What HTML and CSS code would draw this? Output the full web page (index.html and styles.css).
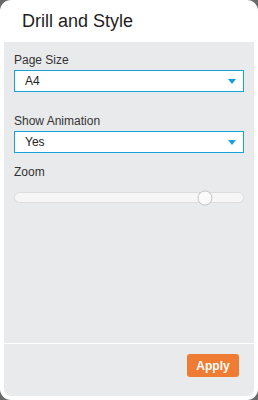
FILE: index.html
```html
<!DOCTYPE html>
<html lang="en">
<head>
    <meta charset="UTF-8">
    <meta name="viewport" content="width=device-width, initial-scale=1.0">
    <title>Drill and Style</title>
    <link rel="stylesheet" href="styles.css">
</head>
<body>
    <div class="dialog">
        <div class="dialog-title">Drill and Style</div>
        <div class="panel">
            <div class="form">
                <div class="field field-page">
                    <div class="label">Page Size</div>
                    <div class="select">
                        <span>A4</span>
                        <span class="arrow"></span>
                    </div>
                </div>
                <div class="field field-anim">
                    <div class="label">Show Animation</div>
                    <div class="select">
                        <span>Yes</span>
                        <span class="arrow"></span>
                    </div>
                </div>
                <div class="field">
                    <div class="label">Zoom</div>
                    <div class="slider">
                        <div class="thumb" style="left: 83.5%"></div>
                    </div>
                </div>
            </div>
            <div class="footer">
                <button class="apply">Apply</button>
            </div>
        </div>
    </div>
</body>
</html>
```

FILE: styles.css
```css
body {
    margin: 0;
    background: #6a6a6a;
    font-family: "Liberation Sans", Arial, sans-serif;
}
.dialog {
    width: 258px;
    height: 400px;
    box-sizing: border-box;
    background: #fff;
    border-radius: 11px;
    padding: 0 4px 4px;
    display: flex;
    flex-direction: column;
}
.dialog-title {
    height: 42px;
    box-sizing: border-box;
    padding: 10px 0 0 18px;
    font-size: 18px;
    line-height: 22px;
    color: #1e1e1e;
}
.panel {
    flex: 1;
    background: #e9eaeb;
    border-radius: 0 0 7px 7px;
    display: flex;
    flex-direction: column;
}
.form {
    flex: 1;
    padding: 11px 10px 0;
}
.label {
    font-size: 12px;
    line-height: 14px;
    color: #333;
    margin-bottom: 3px;
}
.field-page {
    margin-bottom: 22px;
}
.field-anim {
    margin-bottom: 12px;
}
.select {
    height: 22px;
    box-sizing: border-box;
    border: 1px solid #17a3d9;
    background: #fff;
    display: flex;
    align-items: center;
    justify-content: space-between;
    padding: 0 7px 0 10px;
    font-size: 12px;
    color: #222;
}
.arrow {
    width: 0;
    height: 0;
    border-left: 4px solid transparent;
    border-right: 4px solid transparent;
    border-top: 5px solid #1a9fd9;
}
.slider {
    position: relative;
    margin-top: 13px;
    height: 11px;
    box-sizing: border-box;
    background: #f6f6f6;
    border: 1px solid #dcdcdc;
    border-radius: 6px;
}
.thumb {
    position: absolute;
    top: 50%;
    width: 15px;
    height: 15px;
    box-sizing: border-box;
    border: 1px solid #c4c4c4;
    border-radius: 50%;
    background: #fafafa;
    transform: translate(-50%, -50%);
}
.footer {
    border-top: 1px solid #fff;
    padding: 10px 15px 19px;
    display: flex;
    justify-content: flex-end;
}
.apply {
    width: 52px;
    height: 23px;
    border: none;
    border-radius: 3px;
    background: #f07b32;
    color: #fff;
    font-family: "Liberation Sans", Arial, sans-serif;
    font-size: 12px;
    font-weight: bold;
    padding: 0;
    cursor: pointer;
}
```
